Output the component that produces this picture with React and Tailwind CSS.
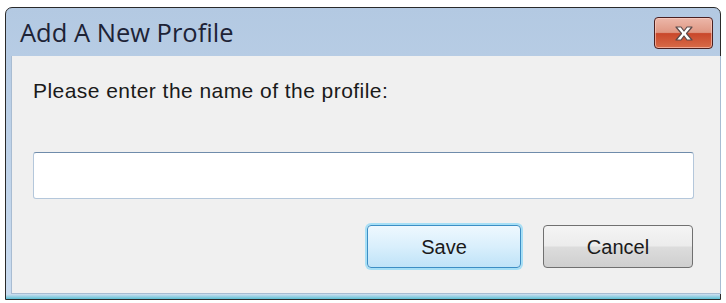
import React from 'react';

const CloseGlyph = () => (
  <svg width="24" height="17" viewBox="0 0 24 17">
    <path
      d="M4 2 L9 2 L12 6 L15 2 L20 2 L14.5 8.5 L20 15 L15 15 L12 11 L9 15 L4 15 L9.5 8.5 Z"
      fill="#ffffff"
      stroke="#5b4a4a"
      strokeWidth="1.2"
      strokeLinejoin="round"
    />
  </svg>
);

export default function App() {
  return (
    <div className="w-[726px] h-[303px] bg-white pt-[7px] pl-[5px]">
      {/* window frame */}
      <div className="w-[716px] h-[293px] border border-[#2a2a2a] rounded-t-[7px] bg-gradient-to-b from-[#b3c9e2] to-[#cadcf0] flex flex-col">
        {/* title bar */}
        <div className="h-[48px] flex items-start justify-between pl-[14px] pr-[7px]">
          <span className="mt-[9px] text-[25.5px] leading-[30px] text-[#1d2336] font-['Open_Sans',sans-serif]">
            Add A New Profile
          </span>
          <button className="mt-[9px] w-[59px] h-[32px] rounded-[4px] border border-[#4a2020] bg-[linear-gradient(to_bottom,#ecb7a9_0%,#df9783_48%,#c9472b_52%,#d76b48_100%)] flex items-center justify-center shadow-[inset_0_0_0_1px_rgba(255,210,200,0.6)]">
            <CloseGlyph />
          </button>
        </div>

        {/* client area */}
        <div className="flex-1 flex ml-[5px] mr-[3px]">
          <div className="flex-1 flex flex-col bg-[#f0f0f0] border-l border-r border-b border-[#a8bcd2] pl-[21px] pr-[26px]">
            <p className="mt-[22px] text-[21px] leading-[25px] tracking-[0.45px] text-[#1a1a1a] font-['Liberation_Sans',Arial,sans-serif]">
              Please enter the name of the profile:
            </p>
            <input
              type="text"
              className="mt-[49px] w-[661px] h-[47px] bg-white rounded-[3px] border border-[#b4c7db] border-t-[#6f8cab] outline-none"
            />
            <div className="mt-[26px] flex justify-end gap-[22px] pr-[1px]">
              <button className="w-[154px] h-[43px] rounded-[4px] border border-[#3d8ec4] bg-gradient-to-b from-[#eef8fe] via-[#d9effc] to-[#bfe3f8] shadow-[0_0_0_2px_#a6dff6] text-[20px] text-[#1a1a1a] font-['Liberation_Sans',Arial,sans-serif]">
                Save
              </button>
              <button className="w-[150px] h-[43px] rounded-[4px] border border-[#707070] bg-[linear-gradient(to_bottom,#f4f4f4_0%,#ececec_48%,#dcdcdc_52%,#cfcfcf_100%)] text-[20px] text-[#1a1a1a] font-['Liberation_Sans',Arial,sans-serif]">
                Cancel
              </button>
            </div>
          </div>
        </div>
        <div className="h-[5px] bg-gradient-to-b from-[#cfe0f1] to-[#58bfd4]" />
      </div>
    </div>
  );
}
